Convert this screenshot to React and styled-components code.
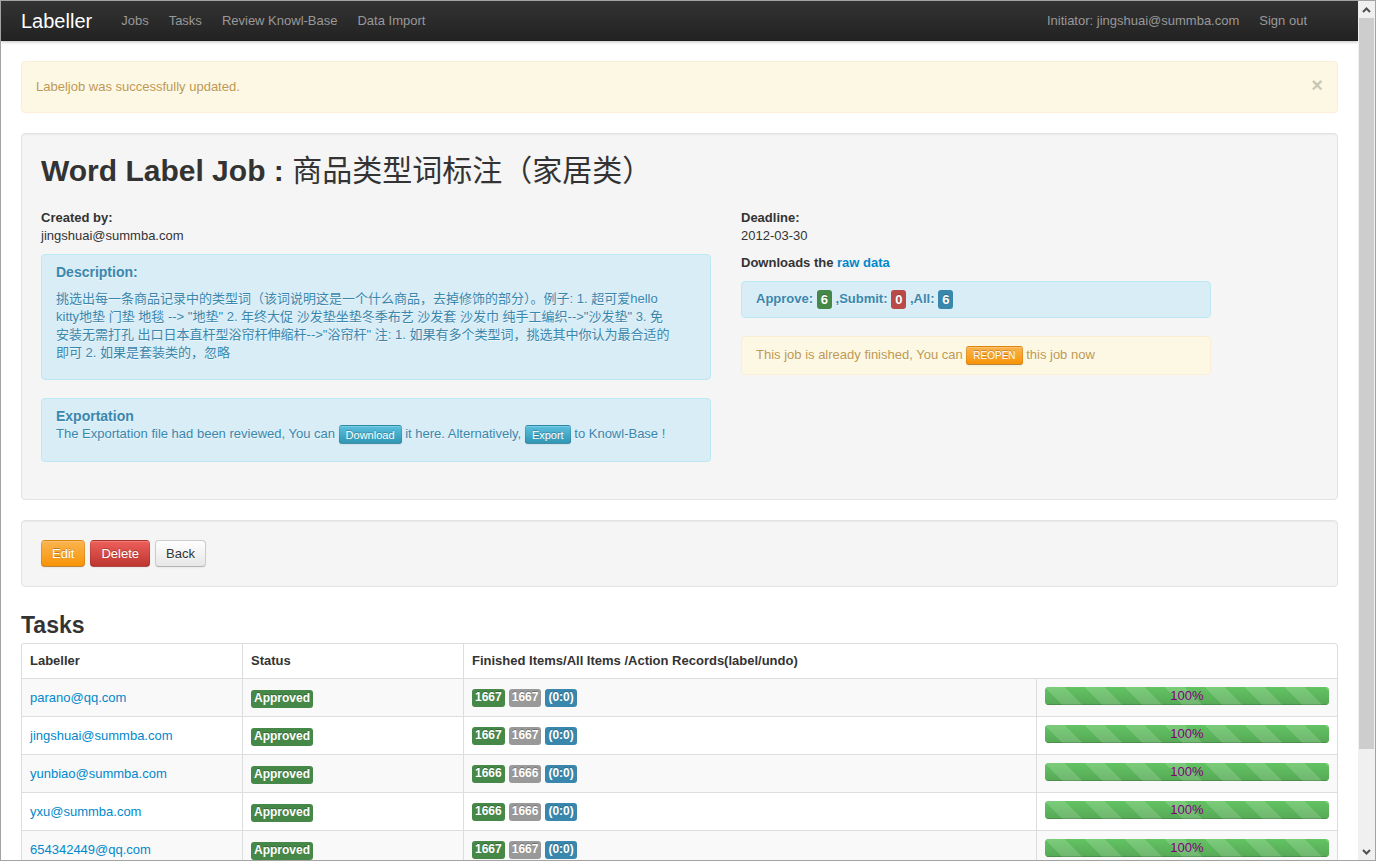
import styled, { createGlobalStyle, css } from "styled-components";

const GlobalStyle = createGlobalStyle`
  html, body {
    margin: 0;
    padding: 0;
  }
  body {
    font-family: "Liberation Sans", Arial, "Noto Sans CJK SC", sans-serif;
    font-size: 13px;
    line-height: 18px;
    color: #333333;
    background: #ffffff;
  }
  * { box-sizing: border-box; }
`;

const tasks = [
  { email: "parano@qq.com", done: 1667, all: 1667, records: "(0:0)" },
  { email: "jingshuai@summba.com", done: 1667, all: 1667, records: "(0:0)" },
  { email: "yunbiao@summba.com", done: 1666, all: 1666, records: "(0:0)" },
  { email: "yxu@summba.com", done: 1666, all: 1666, records: "(0:0)" },
  { email: "654342449@qq.com", done: 1667, all: 1667, records: "(0:0)" },
];

const description =
  '挑选出每一条商品记录中的类型词（该词说明这是一个什么商品，去掉修饰的部分）。例子: 1. 超可爱hello kitty地垫 门垫 地毯 --> "地垫" 2. 年终大促 沙发垫坐垫冬季布艺 沙发套 沙发巾 纯手工编织-->"沙发垫" 3. 免安装无需打孔 出口日本直杆型浴帘杆伸缩杆-->"浴帘杆" 注: 1. 如果有多个类型词，挑选其中你认为最合适的即可 2. 如果是套装类的，忽略';

const Chevron = ({ up }) => (
  <svg width="9" height="6" viewBox="0 0 9 6">
    <path
      d={up ? "M1 5 L4.5 1.5 L8 5" : "M1 1 L4.5 4.5 L8 1"}
      fill="none"
      stroke="#505050"
      strokeWidth="2"
    />
  </svg>
);

const App = () => {
  return (
    <>
      <GlobalStyle />
      <Frame>
        <Page>
          <Navbar>
            <Brand>Labeller</Brand>
            <Nav>
              <NavLink>Jobs</NavLink>
              <NavLink>Tasks</NavLink>
              <NavLink>Review Knowl-Base</NavLink>
              <NavLink>Data Import</NavLink>
            </Nav>
            <NavRight>
              <NavLink>Initiator: jingshuai@summba.com</NavLink>
              <NavLink>Sign out</NavLink>
            </NavRight>
          </Navbar>

          <Container>
            <Alert tone="warning" padY={16} gap={20}>
              <AlertText>Labeljob was successfully updated.</AlertText>
              <Close>×</Close>
            </Alert>

            <Well>
              <Title>
                <strong>Word Label Job :</strong> 商品类型词标注（家居类）
              </Title>
              <Row>
                <LeftCol>
                  <Para>
                    <b>Created by:</b>
                    <br />
                    jingshuai@summba.com
                  </Para>
                  <Alert tone="info">
                    <AlertBody>
                      <AlertHeading>Description:</AlertHeading>
                      <Para>{description}</Para>
                    </AlertBody>
                  </Alert>
                  <Alert tone="info">
                    <AlertBody>
                      <AlertHeading tight>Exportation</AlertHeading>
                      <Para>
                        The Exportation file had been reviewed, You can{" "}
                        <Btn variant="info" size="mini">Download</Btn> it here.
                        Alternatively,{" "}
                        <Btn variant="info" size="mini">Export</Btn> to Knowl-Base !
                      </Para>
                    </AlertBody>
                  </Alert>
                </LeftCol>

                <RightCol>
                  <Para>
                    <b>Deadline:</b>
                    <br />
                    2012-03-30
                  </Para>
                  <Para>
                    <b>
                      Downloads the <Link href="#">raw data</Link>
                    </b>
                  </Para>
                  <Alert tone="info">
                    <Counts>
                      Approve: <Label tone="success" big>6</Label> ,Submit:{" "}
                      <Label tone="important" big>0</Label> ,All:{" "}
                      <Label tone="info" big>6</Label>
                    </Counts>
                  </Alert>
                  <Alert tone="warning" padY={9}>
                    <AlertText>
                      This job is already finished, You can{" "}
                      <Btn variant="warning" size="mini" caps>REOPEN</Btn> this job now
                    </AlertText>
                  </Alert>
                </RightCol>
              </Row>
            </Well>

            <Well>
              <Actions>
                <Btn variant="warning">Edit</Btn>
                <Btn variant="danger">Delete</Btn>
                <Btn>Back</Btn>
              </Actions>
            </Well>

            <SectionTitle>Tasks</SectionTitle>
            <Table>
              <colgroup>
                <col style={{ width: 221 }} />
                <col style={{ width: 221 }} />
                <col style={{ width: 573 }} />
                <col />
              </colgroup>
              <thead>
                <tr>
                  <Th>Labeller</Th>
                  <Th>Status</Th>
                  <Th colSpan={2}>Finished Items/All Items /Action Records(label/undo)</Th>
                </tr>
              </thead>
              <tbody>
                {tasks.map((t) => (
                  <tr key={t.email}>
                    <Td>
                      <Link href="#">{t.email}</Link>
                    </Td>
                    <Td>
                      <Label tone="success">Approved</Label>
                    </Td>
                    <Td>
                      <Labels>
                        <Label tone="success">{t.done}</Label>
                        <Label tone="muted">{t.all}</Label>
                        <Label tone="info">{t.records}</Label>
                      </Labels>
                    </Td>
                    <Td>
                      <Progress>
                        <Bar style={{ width: `${(t.done / t.all) * 100}%` }}>
                          {Math.round((t.done / t.all) * 100)}%
                        </Bar>
                      </Progress>
                    </Td>
                  </tr>
                ))}
              </tbody>
            </Table>
          </Container>
        </Page>

        <Scrollbar>
          <ScrollArrow>
            <Chevron up />
          </ScrollArrow>
          <Thumb />
          <Track />
          <ScrollArrow>
            <Chevron />
          </ScrollArrow>
        </Scrollbar>
      </Frame>
    </>
  );
};

const Frame = styled.div`
  width: 1376px;
  height: 861px;
  border: 1px solid #a3a3a3;
  display: flex;
  overflow: hidden;
`;

const Page = styled.div`
  flex: 1;
  min-width: 0;
  overflow: hidden;
  background: #ffffff;
`;

const Navbar = styled.div`
  height: 40px;
  display: flex;
  align-items: center;
  padding: 0 20px;
  background-color: #2c2c2c;
  background-image: linear-gradient(to bottom, #333333, #222222);
  box-shadow: 0 1px 3px rgba(0, 0, 0, 0.25), inset 0 -1px 0 rgba(0, 0, 0, 0.1);
  position: relative;
`;

const Brand = styled.a`
  font-size: 20px;
  line-height: 1;
  color: #ffffff;
  padding-right: 19px;
  margin-top: -1px;
`;

const Nav = styled.div`
  display: flex;
  flex: 1;
`;

const NavRight = styled.div`
  display: flex;
  margin-right: 21px;
`;

const NavLink = styled.a`
  color: #999999;
  font-size: 13px;
  padding: 0 10px;
  line-height: 40px;
`;

const Container = styled.div`
  padding: 20px 20px 0 20px;
`;

const tones = {
  warning: css`
    background: #fcf8e3;
    border-color: #fbeed5;
    color: #c09853;
  `,
  info: css`
    background: #d9edf7;
    border-color: #bce8f1;
    color: #3a87ad;
  `,
};

const Alert = styled.div`
  display: flex;
  align-items: center;
  padding: ${(p) => p.padY || 8}px 14px;
  margin-bottom: ${(p) => p.gap || 18}px;
  border: 1px solid;
  border-radius: 4px;
  text-shadow: 0 1px 0 rgba(255, 255, 255, 0.5);
  ${(p) => tones[p.tone]}
`;

const AlertText = styled.div`
  flex: 1;
`;

const AlertBody = styled.div`
  flex: 1;
  padding-right: 21px;
`;

const AlertHeading = styled.h4`
  margin: 0 0 ${(p) => (p.tight ? 0 : 9)}px;
  font-size: 14px;
  line-height: 18px;
  font-weight: bold;
  color: #3a87ad;
`;

const Close = styled.span`
  font-size: 20px;
  font-weight: bold;
  line-height: 18px;
  color: #000000;
  opacity: 0.2;
  text-shadow: 0 1px 0 #ffffff;
  margin-top: -4px;
`;

const Well = styled.div`
  background: #f5f5f5;
  border: 1px solid #e3e3e3;
  border-radius: 4px;
  padding: 19px;
  margin-bottom: 20px;
  box-shadow: inset 0 1px 1px rgba(0, 0, 0, 0.05);
`;

const Title = styled.h1`
  margin: 0 0 20px;
  font-size: 30px;
  line-height: 36px;
  font-weight: normal;
  color: #333333;

  strong {
    font-weight: bold;
  }
`;

const Row = styled.div`
  display: flex;
  gap: 30px;
`;

const LeftCol = styled.div`
  width: 670px;
`;

const RightCol = styled.div`
  width: 470px;
`;

const Para = styled.p`
  margin: 0 0 ${(p) => (p.gap !== undefined ? p.gap : 9)}px;
`;

const Link = styled.a`
  color: #0088cc;
  text-decoration: none;
`;

const Counts = styled.div`
  font-weight: bold;
  font-size: 13px;
`;

const labelTones = {
  success: "#468847",
  important: "#b94a48",
  info: "#3a87ad",
  muted: "#999999",
};

const Label = styled.span`
  display: inline-block;
  padding: ${(p) => (p.big ? "2px 4px 2px" : "1px 3px 2px")};
  font-size: ${(p) => (p.big ? 13 : 12)}px;
  line-height: 15px;
  font-weight: bold;
  color: #ffffff;
  text-shadow: 0 -1px 0 rgba(0, 0, 0, 0.25);
  background-color: ${(p) => labelTones[p.tone]};
  border-radius: 3px;
  vertical-align: middle;
`;

const Labels = styled.div`
  display: flex;
  gap: 4px;
  align-items: center;
  height: 21px;
`;

const btnVariants = {
  warning: css`
    color: #ffffff;
    background-color: #faa732;
    background-image: linear-gradient(to bottom, #fbb450, #f89406);
    border-color: rgba(0, 0, 0, 0.1) rgba(0, 0, 0, 0.1) rgba(0, 0, 0, 0.25);
    text-shadow: 0 -1px 0 rgba(0, 0, 0, 0.25);
  `,
  danger: css`
    color: #ffffff;
    background-color: #da4f49;
    background-image: linear-gradient(to bottom, #ee5f5b, #bd362f);
    border-color: rgba(0, 0, 0, 0.1) rgba(0, 0, 0, 0.1) rgba(0, 0, 0, 0.25);
    text-shadow: 0 -1px 0 rgba(0, 0, 0, 0.25);
  `,
  info: css`
    color: #ffffff;
    background-color: #49afcd;
    background-image: linear-gradient(to bottom, #5bc0de, #2f96b4);
    border-color: rgba(0, 0, 0, 0.1) rgba(0, 0, 0, 0.1) rgba(0, 0, 0, 0.25);
    text-shadow: 0 -1px 0 rgba(0, 0, 0, 0.25);
  `,
  default: css`
    color: #333333;
    background-color: #f5f5f5;
    background-image: linear-gradient(to bottom, #ffffff, #e6e6e6);
    border-color: #cccccc #cccccc #b3b3b3;
    text-shadow: 0 1px 1px rgba(255, 255, 255, 0.75);
  `,
};

const Btn = styled.a`
  display: inline-block;
  border: 1px solid;
  cursor: pointer;
  vertical-align: middle;
  box-shadow: inset 0 1px 0 rgba(255, 255, 255, 0.2), 0 1px 2px rgba(0, 0, 0, 0.05);
  ${(p) =>
    p.size === "mini"
      ? css`
          padding: 2px 6px 1px;
          font-size: ${p.caps ? 10 : 11}px;
          line-height: 14px;
          border-radius: 3px;
        `
      : css`
          padding: 4px 10px 3px;
          font-size: 13px;
          line-height: 18px;
          border-radius: 4px;
        `}
  ${(p) => btnVariants[p.variant || "default"]}
`;

const Actions = styled.div`
  display: flex;
  gap: 5px;
`;

const SectionTitle = styled.h2`
  margin: 3px 0 0;
  font-size: 23px;
  line-height: 36px;
  font-weight: bold;
  color: #333333;
`;

const Table = styled.table`
  width: 100%;
  table-layout: fixed;
  border-collapse: separate;
  border-spacing: 0;
  border: 1px solid #dddddd;
  border-left: 0;
  border-radius: 4px;

  tbody tr:nth-child(odd) td {
    background-color: #f9f9f9;
  }
`;

const Th = styled.th`
  text-align: left;
  font-weight: bold;
  padding: 8px;
  line-height: 18px;
  border-left: 1px solid #dddddd;
`;

const Td = styled.td`
  padding: 8px;
  line-height: 21px;
  vertical-align: top;
  border-left: 1px solid #dddddd;
  border-top: 1px solid #dddddd;
`;

const Progress = styled.div`
  height: 18px;
  margin-top: 0;
  border-radius: 4px;
  overflow: hidden;
  background: #f7f7f7;
`;

const Bar = styled.div`
  height: 100%;
  background-color: #62c462;
  background-image: linear-gradient(
      45deg,
      rgba(255, 255, 255, 0.15) 25%,
      transparent 25%,
      transparent 50%,
      rgba(255, 255, 255, 0.15) 50%,
      rgba(255, 255, 255, 0.15) 75%,
      transparent 75%,
      transparent
    ),
    linear-gradient(to bottom, #62c462, #57a957);
  background-size: 40px 40px, 100% 100%;
  box-shadow: inset 0 -1px 0 rgba(0, 0, 0, 0.15);
  color: #800080;
  text-align: center;
  font-size: 13px;
  line-height: 18px;
`;

const Scrollbar = styled.div`
  width: 17px;
  flex-shrink: 0;
  display: flex;
  flex-direction: column;
  background: #f0f0f0;
`;

const ScrollArrow = styled.div`
  height: 17px;
  display: flex;
  align-items: center;
  justify-content: center;
`;

const Thumb = styled.div`
  height: 731px;
  margin: 0 1px;
  background: #cdcdcd;
`;

const Track = styled.div`
  flex: 1;
`;

export default App;
